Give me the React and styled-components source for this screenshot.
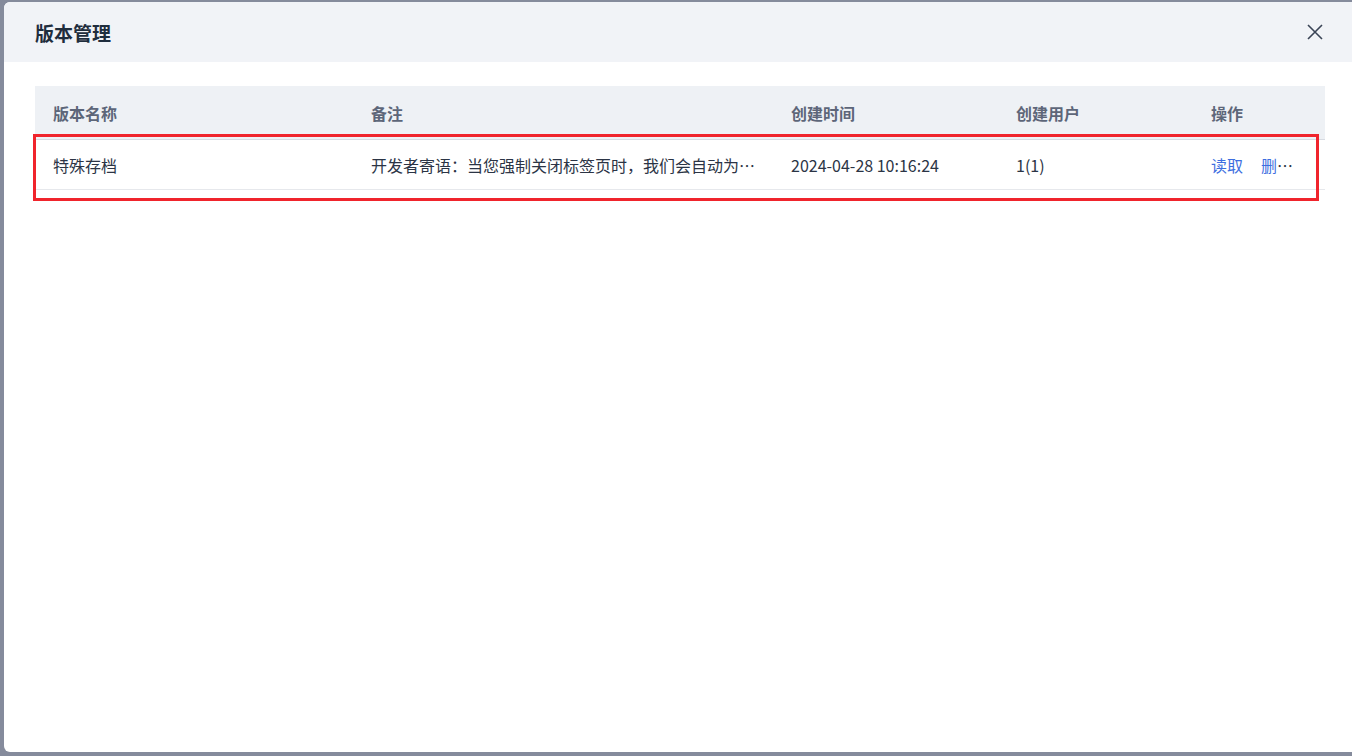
import React from "react";
import styled, { createGlobalStyle } from "styled-components";

const Global = createGlobalStyle`
  html, body { margin: 0; height: 100%; background: #858b9c; }
  body { font-family: "Noto Sans CJK SC", "Noto Sans", sans-serif; }
`;

const Page = styled.div`
  height: 756px;
  padding: 2px 0 4px 4px;
  box-sizing: border-box;
  display: flex;
`;

const Dialog = styled.div`
  flex: 1;
  background: #fff;
  border-radius: 6px 0 0 6px;
  display: flex;
  flex-direction: column;
  overflow: hidden;
`;

const Header = styled.div`
  height: 60px;
  background: #f1f3f7;
  display: flex;
  align-items: center;
  justify-content: space-between;
  padding: 0 28px 0 31px;
`;

const Title = styled.h2`
  margin: 0;
  font-size: 19px;
  font-weight: 700;
  color: #1f2d3d;
`;

const Close = styled.button`
  border: none;
  background: none;
  padding: 0;
  display: flex;
  cursor: pointer;
`;

const Body = styled.div`
  padding: 24px 27px 0 31px;
`;

const Table = styled.div`
  position: relative;
`;

const cols = "318px 420px 225px 195px 1fr";

const HeadRow = styled.div`
  display: grid;
  grid-template-columns: ${cols};
  height: 53px;
  align-items: center;
  background: #eef1f5;
  border-bottom: 1px solid #d7dbe2;
  padding-left: 18px;
`;

const Row = styled.div`
  display: grid;
  grid-template-columns: ${cols};
  height: 49px;
  align-items: center;
  border-bottom: 1px solid #e6e8ec;
  padding-left: 18px;
`;

const Th = styled.div`
  font-size: 16px;
  font-weight: 700;
  color: #5d6679;
`;

const Td = styled.div`
  font-size: 16px;
  color: #2b3445;
  white-space: nowrap;
  overflow: hidden;
  text-overflow: ellipsis;
  padding-right: 30px;
`;

const Link = styled.a`
  color: #3d6ee0;
  margin-right: 18px;
  cursor: pointer;
`;

const Highlight = styled.div`
  position: absolute;
  left: -2px;
  top: 48px;
  width: 1280px;
  height: 61px;
  border: 3px solid #f0242c;
  pointer-events: none;
`;

export default function App() {
  return (
    <>
      <Global />
      <Page>
        <Dialog>
          <Header>
            <Title>版本管理</Title>
            <Close aria-label="关闭">
              <svg width="18" height="18" viewBox="0 0 18 18">
                <path d="M2 2L16 16M16 2L2 16" stroke="#3a4456" strokeWidth="1.6" />
              </svg>
            </Close>
          </Header>
          <Body>
            <Table>
              <HeadRow>
                <Th>版本名称</Th>
                <Th>备注</Th>
                <Th>创建时间</Th>
                <Th>创建用户</Th>
                <Th>操作</Th>
              </HeadRow>
              <Row>
                <Td>特殊存档</Td>
                <Td>开发者寄语：当您强制关闭标签页时，我们会自动为您保存</Td>
                <Td>2024-04-28 10:16:24</Td>
                <Td>1(1)</Td>
                <Td>
                  <Link>读取</Link>
                  <Link>删除</Link>
                </Td>
              </Row>
              <Highlight />
            </Table>
          </Body>
        </Dialog>
      </Page>
    </>
  );
}
